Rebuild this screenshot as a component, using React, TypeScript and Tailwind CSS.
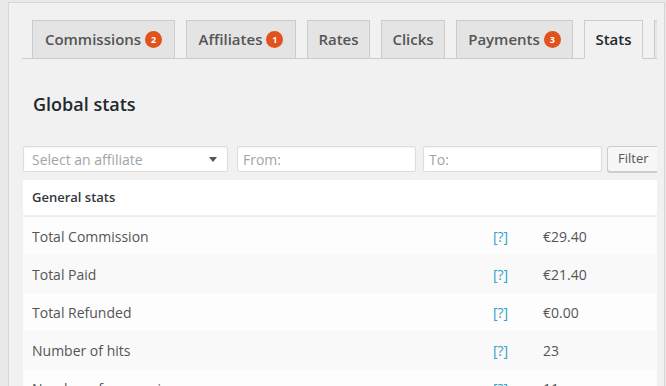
import React from "react";

const tabs = [
  { label: "Commissions", badge: "2", w: "w-[143px]" },
  { label: "Affiliates", badge: "1", w: "w-[110px]" },
  { label: "Rates", w: "w-[63px]" },
  { label: "Clicks", w: "w-[64px]" },
  { label: "Payments", badge: "3", w: "w-[117px]" },
  { label: "Stats", active: true, w: "w-[59px]" },
];

const rows = [
  { label: "Total Commission", value: "€29.40" },
  { label: "Total Paid", value: "€21.40" },
  { label: "Total Refunded", value: "€0.00" },
  { label: "Number of hits", value: "23" },
  { label: "Number of conversions", value: "11" },
];

export default function App() {
  return (
    <div className="w-[666px] h-[386px] overflow-hidden bg-[#e9e9e9] pl-[8px] pt-[2px] font-['Open_Sans',sans-serif]">
      <div className="h-[420px] w-[657px] border-l border-t border-r border-[#d6d6d6] bg-[#f1f1f1]">
        <div className="w-[648px] h-full overflow-hidden pl-[13px] pt-[17px]">
          {/* Tabs */}
          <div className="flex w-[633px] gap-[11px] pl-[10px] border-b border-[#cccccc]">
            {tabs.map((t) => (
              <div
                key={t.label}
                className={
                  (t.active
                    ? "-mb-px flex h-[39px] shrink-0 items-center justify-center border border-[#cccccc] border-b-[#f1f1f1] bg-[#f1f1f1] text-[15px] font-semibold text-[#23282d] "
                    : "-mb-px flex h-[39px] shrink-0 items-center justify-center border border-[#cccccc] bg-[#e4e4e4] text-[15px] font-semibold text-[#555555] ") +
                  t.w
                }
              >
                <span>{t.label}</span>
                {t.badge && (
                  <span className="ml-[4px] flex h-[17px] w-[17px] items-center justify-center rounded-full bg-[#e2521d] text-[9px] font-bold leading-none text-white">
                    {t.badge}
                  </span>
                )}
              </div>
            ))}
            <div className="-mb-px h-[39px] w-[60px] shrink-0 border border-[#cccccc] bg-[#e4e4e4]" />
          </div>

          {/* Heading */}
          <h2 className="mt-[33px] pl-[11px] text-[18px] leading-[24px] font-semibold text-[#23282d]">
            Global stats
          </h2>

          {/* Filter row */}
          <div className="mt-[30px] ml-[1px] flex h-[26px] items-stretch text-[14px]">
            <div className="flex w-[205px] shrink-0 items-center justify-between rounded-[2px] border border-[#dddddd] bg-white pl-[8px] pr-[10px] text-[#a0a5aa] shadow-[inset_0_1px_2px_rgba(0,0,0,0.05)]">
              <span>Select an affiliate</span>
              <svg width="8" height="5" viewBox="0 0 8 5">
                <path d="M0 0 L8 0 L4 5 Z" fill="#555" />
              </svg>
            </div>
            <div className="ml-[9px] flex w-[179px] shrink-0 items-center rounded-[2px] border border-[#dddddd] bg-white pl-[5px] text-[#a0a5aa] shadow-[inset_0_1px_2px_rgba(0,0,0,0.05)]">
              From:
            </div>
            <div className="ml-[7px] flex w-[179px] shrink-0 items-center rounded-[2px] border border-[#dddddd] bg-white pl-[5px] text-[#a0a5aa] shadow-[inset_0_1px_2px_rgba(0,0,0,0.05)]">
              To:
            </div>
            <div className="ml-[5px] flex w-[60px] shrink-0 items-center rounded-[3px] border border-[#cccccc] bg-[#f7f7f7] pl-[10px] text-[13px] text-[#555555] shadow-[0_1px_0_#cccccc]">
              Filter
            </div>
          </div>

          {/* Table */}
          <div className="mt-[8px] ml-[1px] w-[640px] bg-white text-[14px]">
            <div className="flex h-[37px] items-center border-b-2 border-[#eeeeee] pl-[9px] text-[13px] font-semibold text-[#32373c]">
              General stats
            </div>
            {rows.map((r, i) => (
              <div
                key={r.label}
                className={
                  i % 2 === 1
                    ? "grid h-[38px] grid-cols-[461px_50px_1fr] items-center bg-[#f9f9f9] pl-[9px] text-[#555555]"
                    : "grid h-[38px] grid-cols-[461px_50px_1fr] items-center bg-[#fdfdfd] pl-[9px] text-[#555555]"
                }
              >
                <span>{r.label}</span>
                <span className="text-[#2ea2cc]">[?]</span>
                <span>{r.value}</span>
              </div>
            ))}
          </div>
        </div>
      </div>
    </div>
  );
}
